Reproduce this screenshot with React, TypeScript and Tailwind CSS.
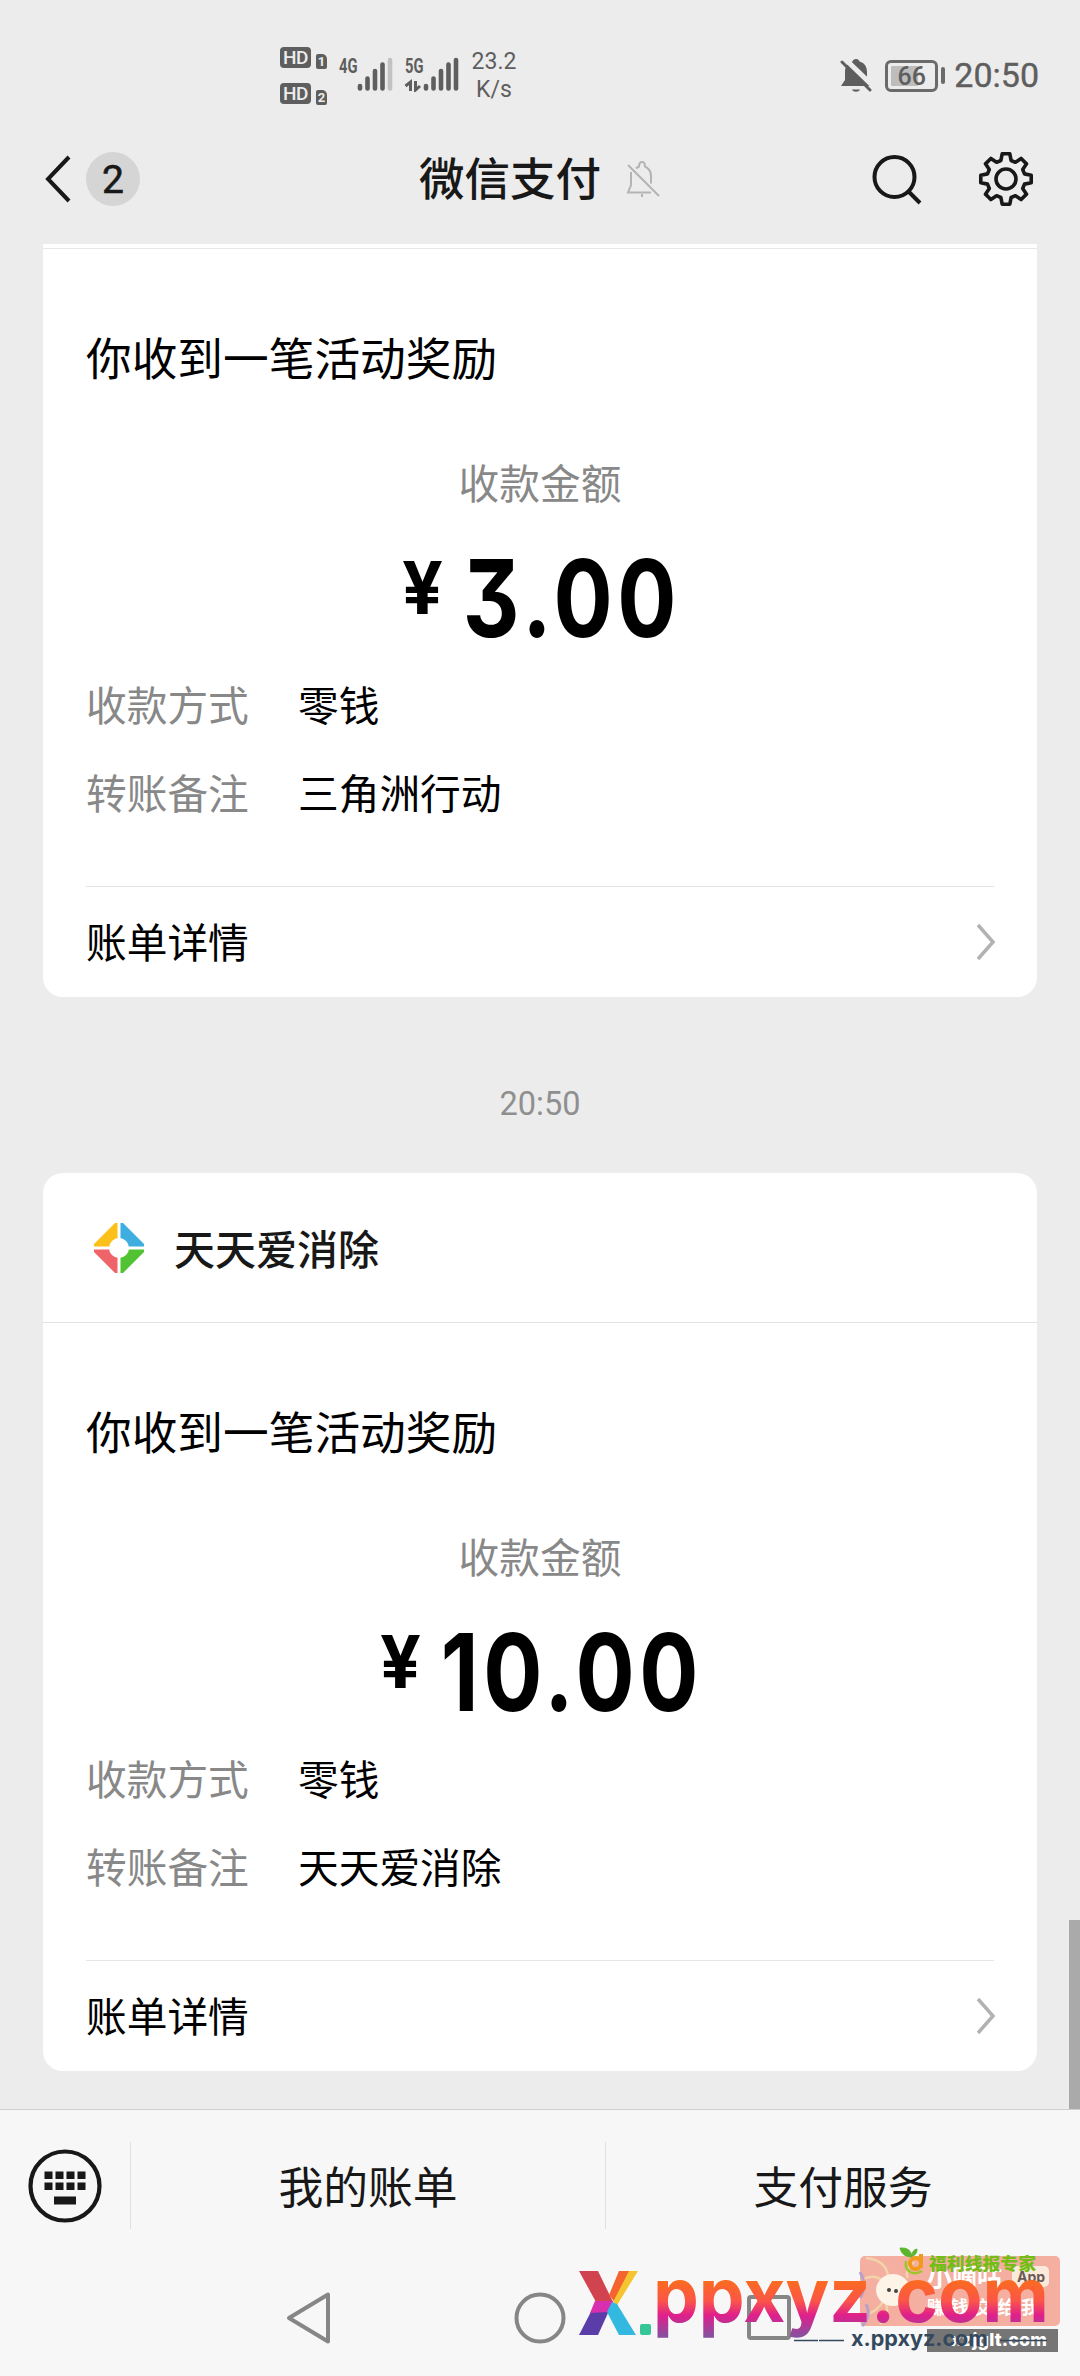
const CJK = "font-['Noto_Sans_CJK_SC',sans-serif]";

type Bill = {
  amount: string;
  note: string;
  title?: string;
};

const bills: Bill[] = [
  { amount: "3.00", note: "三角洲行动" },
  { amount: "10.00", note: "天天爱消除", title: "天天爱消除" },
];

function HdBadge({ sim }: { sim: string }) {
  return (
    <div className="flex items-end gap-[5px] h-[22px]">
      <span className="w-[31px] h-[21px] rounded-[4px] bg-[#5e5e5e] text-[#ececec] text-[19px] leading-[21px] font-medium text-center tracking-[-0.5px] mb-px">
        HD
      </span>
      <span className="w-[11px] h-[15px] rounded-[2px] rounded-tr-[5px] bg-[#5e5e5e] text-[#ececec] text-[13px] leading-[15px] font-bold text-center">
        {sim}
      </span>
    </div>
  );
}

function Signal({ label, full }: { label: string; full?: boolean }) {
  return (
    <svg width="56" height="36" viewBox="0 0 56 36" className="shrink-0">
      <text x="1" y="17" fontSize="21" fontWeight="700" fill="#5e5e5e" fontFamily="Roboto" textLength="18.5" lengthAdjust="spacingAndGlyphs">
        {label}
      </text>
      <g stroke="#5e5e5e" strokeWidth="4.6" strokeLinecap="round">
        <path d="M22 32.500v-2.500M29.500 32.500V22.500M37 32.500v-17.500M44.500 32.500V8.500" />
        <path d="M52 32.500V4" stroke={full ? "#5e5e5e" : "#c2c2c2"} />
      </g>
      {full && (
        <path d="M6.500 35V26L1.500 30M11.500 25v9l4.500-4" fill="none" stroke="#5e5e5e" strokeWidth="3" />
      )}
    </svg>
  );
}

function StatusBar() {
  return (
    <div className="h-[120px] flex items-start pl-[280px] pr-[41px] text-[#5e5e5e] font-[Roboto,sans-serif]">
      <div className="flex flex-col gap-[14px] mt-[47px]">
        <HdBadge sim="1" />
        <HdBadge sim="2" />
      </div>
      <div className="flex gap-[10px] mt-[56px] ml-[11px]">
        <Signal label="4G" />
        <Signal label="5G" full />
      </div>
      <div className="w-[56px] ml-[6px] mt-[48px] text-center text-[23px] leading-[28px]">
        23.2
        <br />
        K/s
      </div>
      <div className="flex items-center ml-auto mt-[55px] h-[41px]">
        <svg width="32" height="36" viewBox="0 0 32 36" className="mr-[13px]">
          <path d="M16 1c2 0 3 1 3.500 2.500C25 5 27 9 27 14v8l4 6H1l4-6v-8c0-5 2-9 7.500-10.500C13 2 14 1 16 1Z" fill="#5e5e5e" />
          <path d="M12 31.500h8c-1 3-7 3-8 0Z" fill="#5e5e5e" />
          <path d="M4 0L34 29" stroke="#ececec" strokeWidth="5" />
          <path d="M2 4L30 32" stroke="#5e5e5e" strokeWidth="3" strokeLinecap="round" />
        </svg>
        <div className="w-[53px] h-[32px] border-[3px] border-[#6a6a6a] rounded-[6px] p-[3px] relative">
          <div className="w-[27px] h-[20px] bg-[#bdbdbd] rounded-[1px]" />
          <span className="absolute inset-0 text-center text-[25px] leading-[27px] font-medium">66</span>
        </div>
        <div className="w-[4px] h-[17px] bg-[#6a6a6a] rounded-[2px] ml-[3px]" />
        <span className="text-[34px] leading-[41px] ml-[9px] [-webkit-text-stroke:0.4px_#5e5e5e]">20:50</span>
      </div>
    </div>
  );
}

// outline of the eight-toothed cog, built tooth by tooth
function gearPath() {
  const pts: string[] = [];
  for (let i = 0; i < 8; i++) {
    const a = (i * Math.PI) / 4;
    const p = (r: number, off: number) =>
      `${(28 + r * Math.sin(a + off)).toFixed(2)} ${(28 - r * Math.cos(a + off)).toFixed(2)}`;
    pts.push(p(19.2, -0.27), p(25.5, -0.15), p(25.5, 0.15), p(19.2, 0.27));
  }
  return `M${pts.join("L")}Z`;
}

function TitleBar() {
  return (
    <div className="h-[124px] flex items-center relative pl-[44px] pr-[46px] pb-[6px] text-[#181818]">
      <svg width="28" height="48" viewBox="0 0 28 48" fill="none" stroke="#181818" strokeWidth="4">
        <path d="M25 2L4 24L25 46" />
      </svg>
      <span className="ml-[14px] size-[54px] rounded-full bg-[#d5d5d5] text-center text-[39px] leading-[56px] font-[Roboto,sans-serif] [-webkit-text-stroke:0.6px_#181818]">
        2
      </span>
      <div className="absolute left-[419px] top-0 h-[118px] flex items-center">
        <h1 className="text-[45.5px] leading-none font-medium -mt-[4px]">微信支付</h1>
        <svg width="34" height="38" viewBox="0 0 34 38" className="ml-[25px]" fill="none" stroke="#b4b4b4" strokeWidth="2">
          <path d="M5 12v13L2 32.500h23M10 8.500c1-1 2-1.500 3-2 0-3 1.500-4.500 3-4.500s3 1.500 3 4.500c4 2 6 5 6 9.500v7.500" />
          <path d="M2 5L33 36" />
          <path d="M15 35.500h2" strokeWidth="3" />
        </svg>
      </div>
      <svg width="52" height="52" viewBox="0 0 52 52" className="ml-auto" fill="none" stroke="#181818" strokeWidth="4">
        <circle cx="24.500" cy="24" r="20" />
        <path d="M38.500 38.500L50 50" />
      </svg>
      <svg width="56" height="56" viewBox="0 0 56 56" className="ml-[56px]" fill="none" stroke="#181818" strokeWidth="3.6" strokeLinejoin="round">
        <path d={gearPath()} />
        <circle cx="28" cy="28" r="10" />
      </svg>
    </div>
  );
}

function GameLogo() {
  return (
    <svg width="50" height="50" viewBox="0 0 50 50">
      <path d="M23.500 0H21L0 21v2.500h23.500Z" fill="#fbc01a" />
      <path d="M26.500 0H29L50 21v2.500H26.500Z" fill="#3eaee0" />
      <path d="M0 26.500h23.500V50H21L0 29Z" fill="#ef6468" />
      <path d="M26.500 26.500H50V29L29 50h-2.500Z" fill="#51c332" />
      <circle cx="25" cy="25" r="10" fill="#fff" />
    </svg>
  );
}

function Row({ label, value }: { label: string; value: string }) {
  return (
    <div className="flex h-[88px] items-center text-[40.7px] leading-none">
      <span className="w-[212px] text-[#888]">{label}</span>
      <span>{value}</span>
    </div>
  );
}

function BillCard({ bill }: { bill: Bill }) {
  return (
    <section
      className={
        bill.title
          ? "mx-[43px] bg-white rounded-[20px] text-black"
          : "mx-[43px] bg-white rounded-b-[20px] text-black"
      }
    >
      {bill.title ? (
        <div className="h-[150px] flex items-center pl-[51px] gap-[30px] border-b-[1.5px] border-[#e3e3e3]">
          <GameLogo />
          <span className="text-[41px] leading-none font-medium text-[#181818] -mt-px">{bill.title}</span>
        </div>
      ) : (
        <div className="h-[5px] border-b border-[#e8e8e8]" />
      )}
      <div className="px-[43px]">
        <div className="pt-[84px] text-[45.7px] leading-[46px]">你收到一笔活动奖励</div>
        <div className="pt-[82px] text-center text-[40.7px] leading-[41px] text-[#888]">收款金额</div>
        <div className="h-[158px] flex justify-center items-start scale-x-[0.82] font-[Inter,sans-serif] font-bold">
          <span className="text-[73px] leading-[75px] mt-[48px] mr-[28px] scale-x-120">¥</span>
          <span className="text-[107px] leading-[106px] mt-[43px] tracking-[5.5px] -mr-[8px] [font-feature-settings:'cv09']">
            {bill.amount}
          </span>
        </div>
        <Row label="收款方式" value="零钱" />
        <Row label="转账备注" value={bill.note} />
        <div className="mt-[50px] h-[111px] border-t-[1.5px] border-[#e5e5e5] flex items-center justify-between">
          <span className="text-[40.7px] leading-none -mt-[2px]">账单详情</span>
          <svg width="20" height="38" viewBox="0 0 20 38" className="-mr-[2px] -mt-px" fill="none" stroke="#b2b2b2" strokeWidth="3.500">
            <path d="M2 2L17 19L2 36" />
          </svg>
        </div>
      </div>
    </section>
  );
}

function KeyboardIcon() {
  return (
    <svg width="74" height="74" viewBox="0 0 74 74" fill="#181818">
      <circle cx="37" cy="37" r="34.500" fill="none" stroke="#181818" strokeWidth="4.200" />
      {[16.5, 27.5, 38.5, 49.5].map((x) => (
        <g key={x}>
          <rect x={x} y="22.500" width="8" height="7.500" />
          <rect x={x} y="33.500" width="8" height="7.500" />
        </g>
      ))}
      <rect x="26" y="47.500" width="22" height="8" />
    </svg>
  );
}

function Watermarks() {
  return (
    <svg width="502" height="136" viewBox="570 2240 502 136" className="absolute left-[570px] top-[130px]">
      <defs>
        <linearGradient id="word" gradientUnits="userSpaceOnUse" x1="0" y1="2282" x2="0" y2="2336">
          <stop offset="0" stopColor="#fb6a22" />
          <stop offset=".35" stopColor="#fb5548" />
          <stop offset=".62" stopColor="#df1f8c" />
          <stop offset="1" stopColor="#87509f" />
        </linearGradient>
      </defs>
      <rect x="860" y="2256" width="200" height="70" rx="5" fill="#f4afa1" />
      <g fill="none" stroke="#f3d3a8" strokeWidth="2.500">
        <path d="M866 2258q20 2 22 18M862 2280q14-8 24 4M862 2316q16-4 22-16M880 2324q10-8 6-20M914 2262q-10 8-6 16" />
      </g>
      <path d="M860 2272q8 14 0 26M862 2326q10-10 4-22" fill="none" stroke="#b9a0c8" strokeWidth="3" />
      <ellipse cx="893" cy="2290" rx="17" ry="16" fill="#fdf3e6" />
      <circle cx="889" cy="2290" r="2" fill="#444" />
      <circle cx="896" cy="2291" r="2" fill="#444" />
      <g fontFamily="Noto Sans CJK SC" fontWeight="700" fill="#fff">
        <text x="927" y="2286" fontSize="25">小嘀咕</text>
        <text x="927" y="2314" fontSize="18" textLength="112">赚钱交给我</text>
      </g>
      <rect x="1012" y="2266" width="37" height="21" rx="5" fill="#fbeada" />
      <text x="1017" y="2282" fontSize="14" fontWeight="700" fontFamily="Inter" fill="#6b5a58">App</text>
      <circle cx="915.500" cy="2263.500" r="5.500" fill="none" stroke="#f29a1c" strokeWidth="4" />
      <path d="M921 2254v14" stroke="#f29a1c" strokeWidth="4" />
      <path d="M906 2261c-2 11 8 15 16 10" fill="none" stroke="#9cc62a" strokeWidth="2.500" />
      <path d="M900 2248q11-1 12 9q-10 0-12-9ZM912 2256q0-6 5-7q0 6-5 7Z" fill="#5db52b" stroke="#5db52b" />
      <text x="929" y="2270" fontSize="17" fontWeight="900" fontFamily="Noto Sans CJK SC" fill="#74bd17" textLength="107" lengthAdjust="spacingAndGlyphs">
        福利线报专家
      </text>
      <rect x="927" y="2329" width="131" height="23" fill="#757575" />
      <text x="951" y="2346" fontSize="18" fontWeight="800" fontFamily="Inter" fill="#fff" textLength="96">xzjglt.com</text>
      <g fill="#34495e" stroke="#34495e">
        <path d="M794 2340.500h24M819 2340.500h25M1000 2340.500h47" strokeWidth="1.500" />
        <text x="851" y="2346" fontSize="21" fontWeight="700" fontFamily="Inter" strokeWidth="0" textLength="137" lengthAdjust="spacingAndGlyphs">
          x.ppxyz.com
        </text>
      </g>
      <rect x="749" y="2297" width="40" height="41" rx="2" fill="none" stroke="#868686" strokeWidth="4" />
      <text x="653" y="2322" fontSize="76" fontWeight="700" fontFamily="Inter" fill="url(#word)" textLength="396" lengthAdjust="spacingAndGlyphs">
        ppxyz.com
      </text>
      <path d="M579 2271h19l15 31h-17Z" fill="#d0434f" />
      <path d="M619 2271h13l-15 34-8-10Z" fill="#f5632f" />
      <path d="M629 2271h9l-21 34-4-3Z" fill="#f4c531" />
      <path d="M596 2302h17l-15 33h-19Z" fill="#5a3da8" />
      <path d="M595 2301h18l-5 11-18 1Z" fill="#d82fb0" />
      <path d="M612 2302l5 2 19 31h-17l-12-23Z" fill="#33b9e0" />
      <rect x="640" y="2324" width="11" height="11" rx="2" fill="#35c597" />
    </svg>
  );
}

function Footer() {
  return (
    <footer className="relative h-[267px] bg-[#f7f7f7] border-t-[1.5px] border-[#cfcfcf]">
      <div className="h-[151px] flex items-center text-[44.8px] leading-none text-[#181818]">
        <div className="w-[130px] pl-[28px]">
          <KeyboardIcon />
        </div>
        <div className="h-[87px] flex-1 border-l-[1.5px] border-[#e0e0e0] flex items-center justify-center">我的账单</div>
        <div className="h-[87px] flex-1 border-l-[1.5px] border-[#e0e0e0] flex items-center justify-center">支付服务</div>
      </div>
      <div className="h-[112px] flex items-start pt-[30px] pl-[285px] gap-[180px]">
        <svg width="48" height="54" viewBox="0 0 48 54" fill="none" stroke="#868686" strokeWidth="4" strokeLinejoin="round">
          <path d="M43 3.500v47L4 27Z" />
        </svg>
        <svg width="54" height="54" viewBox="0 0 54 54" fill="none" stroke="#868686" strokeWidth="4">
          <circle cx="27" cy="27" r="23.500" />
        </svg>
      </div>
      <Watermarks />
    </footer>
  );
}

export default function App() {
  return (
    <div className={`relative w-[1080px] h-[2376px] overflow-hidden bg-[#ececec] ${CJK}`}>
      <StatusBar />
      <TitleBar />
      <main className="relative h-[1865px]">
        <BillCard bill={bills[0]} />
        <div className="h-[176px] pt-[88px] text-center text-[32.5px] leading-[39px] text-[#8f8f8f] font-[Roboto,sans-serif]">
          20:50
        </div>
        <BillCard bill={bills[1]} />
        <div className="absolute right-0 bottom-0 w-[11px] h-[189px] bg-[#aaa]" />
      </main>
      <Footer />
    </div>
  );
}
